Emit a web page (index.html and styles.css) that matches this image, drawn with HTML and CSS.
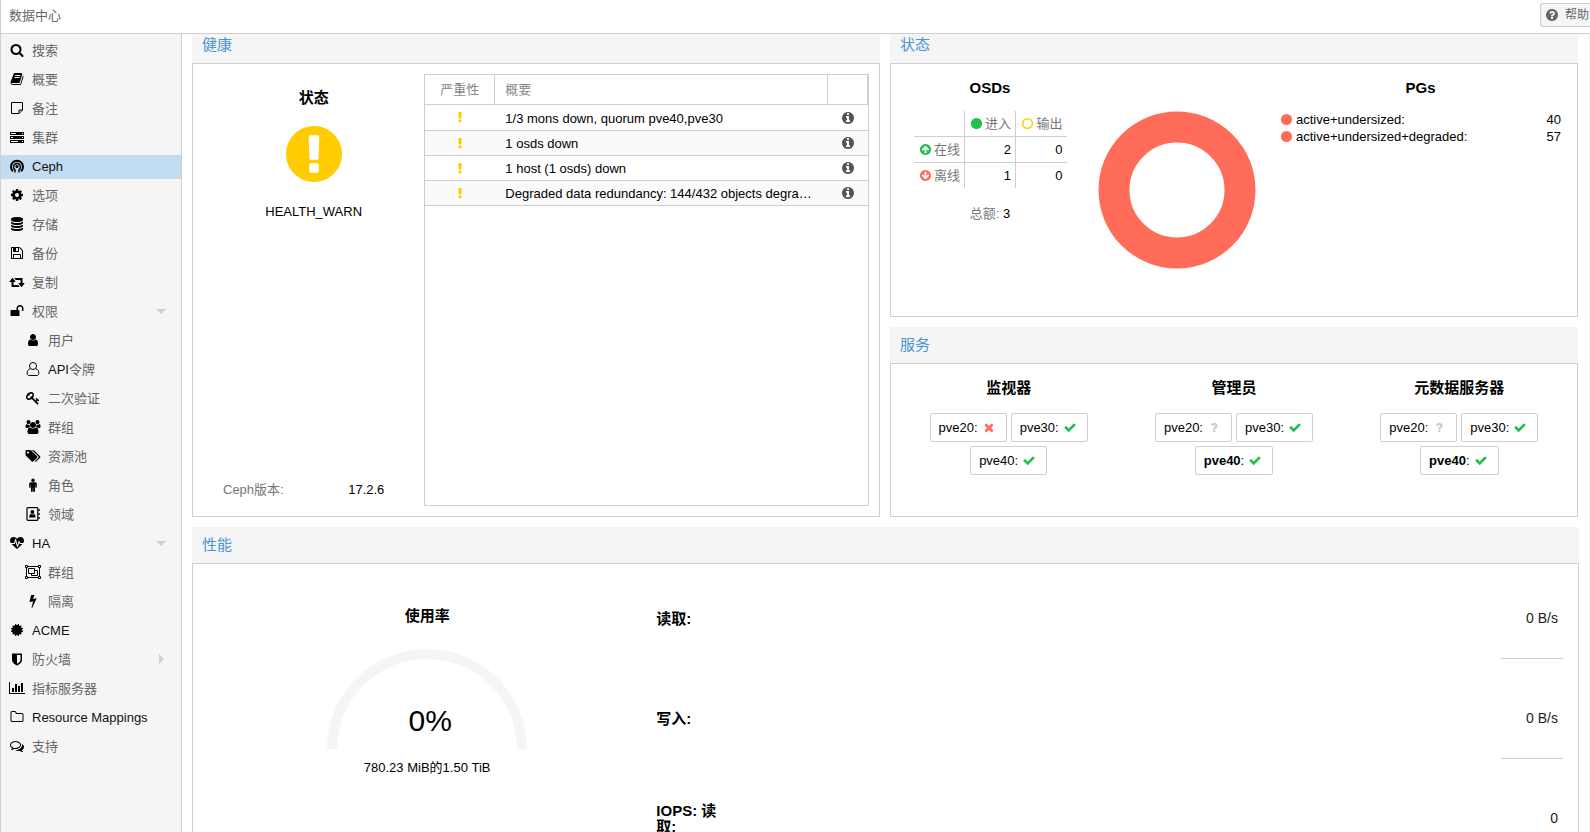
FILE: index.html
```
<!DOCTYPE html>
<html lang="zh-CN">
<head>
<meta charset="utf-8">
<title>数据中心</title>
<link rel="stylesheet" href="styles.css">
</head>
<body>
<svg class="sprite" aria-hidden="true">
  <symbol id="search" viewBox="0 0 1792 1792"><path d="M1216 832q0-185-131.500-316.500t-316.500-131.500-316.500 131.500-131.500 316.500 131.500 316.500 316.500 131.500 316.500-131.500 131.500-316.500zm512 832q0 52-38 90t-90 38q-54 0-90-38l-343-342q-179 124-399 124-143 0-273.500-55.500t-225-150-150-225-55.500-273.500 55.500-273.500 150-225 225-150 273.500-55.500 273.500 55.500 225 150 150 225 55.500 273.500q0 220-124 399l343 343q37 37 37 90z"/></symbol>
  <symbol id="book" viewBox="0 0 1792 1792"><path d="M1703 478q40 57 18 129l-275 906q-19 64-76.500 107.500t-122.500 43.500h-923q-77 0-148.500-53.500t-99.500-131.500q-24-67-2-127 0-4 3-27t4-37q1-8-3-21.500t-3-19.500q2-11 8-21t16.500-23.500 16.500-23.500q23-38 45-91.500t30-91.500q3-10 .5-30t-.5-28q3-11 17-28t17-23q21-36 42-92t25-90q1-9-2.500-32t.5-28q4-13 22-30.500t22-22.500q19-26 42.500-84.500t27.500-96.500q1-8-3-25.500t-2-26.500q2-8 9-18t18-23 17-21q8-12 16.500-30.500t15-35 16-36 19.500-32 26.500-23.500 36-11.500 47.500 5.500l-1 3q38-9 51-9h761q74 0 114 56t18 130l-274 906q-36 119-71.500 153.500t-128.500 34.500h-869q-27 0-38 15-11 16-1 43 24 70 144 70h923q29 0 56-15.500t35-41.500l300-987q7-22 5-57 38 15 59 43zm-1064 2q-4 13 2 22.500t20 9.500h608q13 0 25.500-9.500t16.500-22.500l21-64q4-13-2-22.500t-20-9.500h-608q-13 0-25.500 9.500t-16.500 22.500zm-83 256q-4 13 2 22.500t20 9.500h608q13 0 25.500-9.500t16.500-22.500l21-64q4-13-2-22.500t-20-9.500h-608q-13 0-25.500 9.500t-16.500 22.500z"/></symbol>
  <symbol id="note" viewBox="0 0 14 14"><path fill="none" stroke="currentColor" d="M1.500 1.500h11v7.500l-3.500 3.500h-7.500zM9 12.500v-3.500h3.500"/></symbol>
  <symbol id="server" viewBox="0 0 14 14"><path fill-rule="evenodd" d="M0 2h14v3h-14zM1 3v1h5v-1zM0 6h14v3h-14zM1 7v1h2v-1zM0 10h14v3h-14zM1 11v1h7v-1zM12 3v1h1v-1zM12 7v1h1v-1zM12 11v1h1v-1z"/></symbol>
  <symbol id="ceph" viewBox="0 0 14 14"><g fill="none" stroke="currentColor"><path stroke-width="2" d="M3 12.200a6 6 0 1 1 8 0"/><path stroke-width="1.400" d="M5 13.500v-2.600a3.500 3.500 0 1 1 4 0v2.600"/></g><circle cx="7" cy="7.500" r="1.600"/></symbol>
  <symbol id="cog" viewBox="0 0 1792 1792"><path d="M1152 896q0-106-75-181t-181-75-181 75-75 181 75 181 181 75 181-75 75-181zm512-109v222q0 12-8 23t-20 13l-185 28q-19 54-39 91 35 50 107 138 10 12 10 25t-9 23q-27 37-99 108t-94 71q-12 0-26-9l-138-108q-44 23-91 38-16 136-29 186-7 28-36 28h-222q-14 0-24.500-8.500t-11.500-21.500l-28-184q-49-16-90-37l-141 107q-10 9-25 9-14 0-25-11-126-114-165-168-7-10-7-23 0-12 8-23 15-21 51-66.500t54-70.500q-27-50-41-99l-183-27q-13-2-21-12.500t-8-23.500v-222q0-12 8-23t19-13l186-28q14-46 39-92-40-57-107-138-10-12-10-24 0-10 9-23 26-36 98.500-107.500t94.500-71.500q13 0 26 10l138 107q44-23 91-38 16-136 29-186 7-28 36-28h222q14 0 24.500 8.500t11.500 21.500l28 184q49 16 90 37l142-107q9-9 24-9 13 0 25 10 129 119 165 170 7 8 7 22 0 12-8 23-15 21-51 66.500t-54 70.500q26 50 41 98l183 28q13 2 21 12.500t8 23.500z"/></symbol>
  <symbol id="database" viewBox="0 0 1792 1792"><path d="M896 768q237 0 443-43t325-127v170q0 69-103 128t-280 93.500-385 34.500-385-34.500-280-93.500-103-128v-170q119 84 325 127t443 43zm0 768q237 0 443-43t325-127v170q0 69-103 128t-280 93.500-385 34.500-385-34.500-280-93.500-103-128v-170q119 84 325 127t443 43zm0-384q237 0 443-43t325-127v170q0 69-103 128t-280 93.500-385 34.500-385-34.500-280-93.500-103-128v-170q119 84 325 127t443 43zm0-1152q208 0 385 34.500t280 93.500 103 128v128q0 69-103 128t-280 93.500-385 34.500-385-34.500-280-93.500-103-128v-128q0-69 103-128t280-93.500 385-34.500z"/></symbol>
  <symbol id="floppy" viewBox="0 0 1792 1792"><path d="M512 1536h768v-384h-768v384zm896 0h128v-896q0-14-10-38.500t-20-34.500l-281-281q-10-10-34-20t-39-10v416q0 40-28 68t-68 28h-576q-40 0-68-28t-28-68v-416h-128v1280h128v-416q0-40 28-68t68-28h832q40 0 68 28t28 68v416zm-384-928v-320q0-13-9.500-22.500t-22.500-9.500h-192q-13 0-22.500 9.500t-9.500 22.500v320q0 13 9.500 22.500t22.500 9.500h192q13 0 22.500-9.500t9.500-22.500zm640 32v928q0 40-28 68t-68 28h-1344q-40 0-68-28t-28-68v-1344q0-40 28-68t68-28h928q40 0 88 20t76 48l280 280q28 28 48 76t20 88z"/></symbol>
  <symbol id="retweet" viewBox="0 0 1920 1792"><path d="M1280 1504q0 13-9.500 22.500t-22.500 9.500h-960q-8 0-13.500-2t-9-7-5.500-8-3-11.500-1-11.500v-600h-192q-26 0-45-19t-19-45q0-24 15-41l320-384q19-22 49-22t49 22l320 384q15 17 15 41 0 26-19 45t-45 19h-192v384h576q16 0 25 11l160 192q7 10 7 21zm640-416q0 24-15 41l-320 384q-20 23-49 23t-49-23l-320-384q-15-17-15-41 0-26 19-45t45-19h192v-384h-576q-16 0-25-12l-160-192q-7-9-7-20 0-13 9.500-22.500t22.500-9.500h960q8 0 13.500 2t9 7 5.500 8 3 11.500 1 11.500v600h192q26 0 45 19t19 45z"/></symbol>
  <symbol id="unlock" viewBox="0 0 1792 1792"><path d="M1728 576v256q0 26-19 45t-45 19h-64q-26 0-45-19t-19-45v-256q0-106-75-181t-181-75-181 75-75 181v192h96q40 0 68 28t28 68v576q0 40-28 68t-68 28h-960q-40 0-68-28t-28-68v-576q0-40 28-68t68-28h672v-192q0-185 131.500-316.500t316.500-131.500 316.500 131.500 131.500 316.500z"/></symbol>
  <symbol id="user" viewBox="0 0 1792 1792"><path d="M1536 1399q0 109-62.500 187t-150.500 78h-854q-88 0-150.500-78t-62.500-187q0-85 8.500-160.500t31.500-152 58.500-131 94-89 134.500-34.500q131 128 313 128t313-128q76 0 134.500 34.500t94 89 58.500 131 31.500 152 8.500 160.500zm-256-887q0 159-112.500 271.500t-271.500 112.500-271.500-112.500-112.500-271.500 112.500-271.500 271.500-112.500 271.500 112.500 112.500 271.500z"/></symbol>
  <symbol id="user-o" viewBox="0 0 14 14"><g fill="none" stroke="currentColor"><circle cx="7" cy="4" r="3.500"/><path d="M4 6.800C2 7.300 1.200 9 1.200 11.300c0 1.300.8 2.200 2 2.200h7.600c1.200 0 2-.9 2-2.200 0-2.300-.8-4-2.800-4.500"/></g></symbol>
  <symbol id="key" viewBox="0 0 1792 1792"><path d="M832 512q0-80-56-136t-136-56-136 56-56 136q0 42 19 83-41-19-83-19-80 0-136 56t-56 136 56 136 136 56 136-56 56-136q0-42-19-83 41 19 83 19 80 0 136-56t56-136zm851 704q0 17-49 66t-66 49q-9 0-28.500-16t-36.500-33-38.500-40-24.500-26l-96 96 220 220q28 28 28 68 0 42-39 81t-81 39q-40 0-68-28l-671-671q-176 131-365 131-163 0-265.500-102.500t-102.500-265.500q0-160 95-313t248-248 313-95q163 0 265.500 102.500t102.500 265.500q0 189-131 365l355 355 96-96q-3-3-26-24.500t-40-38.500-33-36.500-16-28.500q0-17 49-66t66-49q13 0 23 10 6 6 46 44.500t82 79.500 86.500 86 73 78 28.500 41z"/></symbol>
  <symbol id="users" viewBox="0 0 2048 1792"><path d="M657 896q-162 5-265 128h-134q-82 0-138-40.500t-56-118.500q0-353 124-353 6 0 43.500 21t97.500 42.500 119 21.500q67 0 133-23-5 37-5 66 0 159 90 256zm1071 637q0 120-73 189.500t-194 69.500h-874q-121 0-194-69.500t-73-189.500q0-53 3.500-103.500t14-109 26.500-108.500 43-97.500 62-81 85.500-53.500 111.500-20q10 0 43 21.500t73 48 107 48 135 21.500 135-21.500 107-48 73-48 43-21.500q61 0 111.500 20t85.500 53.500 62 81 43 97.500 26.500 108.500 14 109 3.500 103.500zm-1024-1277q0 106-75 181t-181 75-181-75-75-181 75-181 181-75 181 75 75 181zm704 384q0 159-112.500 271.500t-271.500 112.500-271.500-112.500-112.500-271.500 112.500-271.500 271.500-112.500 271.500 112.500 112.500 271.500zm576 225q0 78-56 118.500t-138 40.500h-134q-103-123-265-128 90-97 90-256 0-29-5-66 66 23 133 23 59 0 119-21.500t97.500-42.500 43.500-21q124 0 124 353zm-128-609q0 106-75 181t-181 75-181-75-75-181 75-181 181-75 181 75 75 181z"/></symbol>
  <symbol id="tags" viewBox="0 0 1920 1792"><path d="M448 448q0-53-37.500-90.500t-90.500-37.500-90.500 37.500-37.500 90.500 37.500 90.500 90.500 37.500 90.500-37.500 37.500-90.500zm1067 576q0 53-37 90l-491 492q-39 37-91 37-53 0-90-37l-715-716q-38-37-64.500-101t-26.500-117v-416q0-52 38-90t90-38h416q53 0 117 26.500t102 64.500l715 714q37 39 37 91zm384 0q0 53-37 90l-491 492q-39 37-91 37-36 0-59-14t-53-45l470-470q37-37 37-90 0-52-37-91l-715-714q-38-38-102-64.500t-117-26.500h224q53 0 117 26.500t102 64.500l715 714q37 39 37 91z"/></symbol>
  <symbol id="male" viewBox="0 0 14 14"><circle cx="7" cy="2.200" r="1.700"/><path d="M4.700 4.200h4.600a1.500 1.500 0 0 1 1.500 1.500v3.500a.8.800 0 0 1-1.500 0v-2.800h-.3v6.600a.9.900 0 0 1-1.800 0v-3.500h-.4v3.500a.9.900 0 0 1-1.800 0v-6.600h-.3v2.800a.8.800 0 0 1-1.500 0v-3.500a1.500 1.500 0 0 1 1.500-1.500z"/></symbol>
  <symbol id="address" viewBox="0 0 14 14"><rect x="1" y=".6" width="10.800" height="12.800" rx="1" fill="none" stroke="currentColor" stroke-width="1.200"/><circle cx="6.400" cy="5" r="1.900"/><path d="M3.200 10.500c0-2 .6-3.400 1.700-3.600q1.500 1 3 0c1.100.2 1.700 1.600 1.700 3.600zM12.300 2h1.400v2h-1.400zM12.300 6h1.400v2h-1.400zM12.300 10h1.400v2h-1.400z"/></symbol>
  <symbol id="heartbeat" viewBox="0 -128 1792 1792"><path d="M1280 896h305q-5 6-10 10.500t-9 7.500l-3 4-623 600q-18 18-44 18t-44-18l-624-602q-5-2-21-20h369q22 0 39.500-13.500t22.500-34.500l70-281 190 667q6 20 23 33t39 13q21 0 38-13t23-33l146-485 56 112q18 35 57 35zm512-428q0 145-103 300h-369l-111-221q-8-17-25.500-27t-36.500-8q-45 5-56 46l-129 430-196-686q-6-20-23.500-33t-39.500-13-39 13.500-22 34.500l-116 464h-423q-103-155-103-300 0-220 127-344t351-124q62 0 126.500 21.500t120 58 95.500 68.500 76 68q36-36 76-68t95.500-68.500 120-58 126.500-21.500q224 0 351 124t127 344z"/></symbol>
  <symbol id="group" viewBox="0 0 16 14"><g fill="none" stroke="currentColor"><path d="M3 1.500h10M3 12.500h10M1.500 3v8M14.500 3v8"/><path d="M.5.500h2v2h-2zM13.500.500h2v2h-2zM.5 11.500h2v2h-2zM13.500 11.500h2v2h-2z"/><path d="M3.500 3.500h6v5h-6zM9.500 5.500h3v5h-6v-2"/></g></symbol>
  <symbol id="bolt" viewBox="0 0 1792 1792"><path d="M1333 566q18 20 7 44l-540 1157q-13 25-42 25-4 0-14-2-17-5-25.500-19t-4.500-30l197-808-406 101q-4 1-12 1-18 0-31-11-18-15-13-39l201-825q4-14 16-23t28-9h328q19 0 32 12.500t13 29.500q0 8-5 18l-171 463 396-98q8-2 12-2 19 0 34 15z"/></symbol>
  <symbol id="certificate" viewBox="0 0 1792 1792"><path d="M1504 896l138 135q30 28 20 70-12 41-52 51l-188 48 53 186q12 41-19 70-29 31-70 19l-186-53-48 188q-10 40-51 52-12 2-19 2-31 0-51-22l-135-138-135 138q-28 30-70 20-41-11-51-52l-48-188-186 53q-41 12-70-19-31-29-19-70l53-186-188-48q-40-10-52-51-10-42 20-70l138-135-138-135q-30-28-20-70 12-41 52-51l188-48-53-186q-12-41 19-70 29-31 70-19l186 53 48-188q10-41 51-51 41-12 70 19l135 139 135-139q29-30 70-19 41 10 51 51l48 188 186-53q41-12 70 19 31 29 19 70l-53 186 188 48q40 10 52 51 10 42-20 70z"/></symbol>
  <symbol id="shield" viewBox="0 0 1792 1792"><path d="M1344 1024v-640h-448v1137q119-63 213-137 235-184 235-360zm192-768v768q0 86-33.500 170.500t-83 150-118 127.500-126.500 103-121 77.500-89.500 49.500-42.500 20q-12 6-26 6t-26-6q-16-7-42.500-20t-89.500-49.500-121-77.500-126.500-103-118-127.500-83-150-33.500-170.500v-768q0-26 19-45t45-19h1152q26 0 45 19t19 45z"/></symbol>
  <symbol id="chart" viewBox="0 0 2048 1792"><path d="M640 896v512h-256v-512h256zm384-512v1024h-256v-1024h256zm1024 1152v128h-2048v-1536h128v1408h1920zm-640-896v768h-256v-768h256zm384-384v1152h-256v-1152h256z"/></symbol>
  <symbol id="folder" viewBox="0 0 1792 1792"><path d="M1600 1312v-704q0-40-28-68t-68-28h-704q-40 0-68-28t-28-68v-64q0-40-28-68t-68-28h-320q-40 0-68 28t-28 68v960q0 40 28 68t68 28h1216q40 0 68-28t28-68zm128-704v704q0 92-66 158t-158 66h-1216q-92 0-158-66t-66-158v-960q0-92 66-158t158-66h320q92 0 158 66t66 158v32h672q92 0 158 66t66 158z"/></symbol>
  <symbol id="comments" viewBox="0 0 1792 1792"><path d="M704 384q-153 0-286 52t-211.500 141-78.500 191q0 82 53 158t149 132l97 56-35 84q34-20 62-39l44-31 53 10q78 14 153 14 153 0 286-52t211.500-141 78.500-191-78.500-191-211.500-141-286-52zm0-128q191 0 353.500 68.500t256.500 186.500 94 257-94 257-256.500 186.500-353.500 68.500q-86 0-176-16-124 88-278 128-36 9-86 16h-3q-11 0-20.500-8t-11.500-21q-1-3-1-6.500t.5-6.500 2-6l2.500-5 3.500-5.500 4-5 4.500-5 4-4.500q5-6 23-25t26-29.500 22.500-29 25-38.500 20.500-44q-124-72-195-177t-71-224q0-139 94-257t256.500-186.500 353.500-68.500zm822 1169q10 24 20.500 44t25 38.500 22.500 29 26 29.500 23 25q1 1 4 4.500t4.500 5 4 5 3.500 5.500l2.500 5 2 6 .5 6.500-1 6.500q-3 14-13 22t-22 7q-50-7-86-16-154-40-278-128-90 16-176 16-271 0-472-132 58 4 88 4 161 0 309-45t264-129q125-92 192-212t67-254q0-77-23-152 129 71 204 178t75 230q0 120-71 224.500t-195 176.500z"/></symbol>
  <symbol id="help" viewBox="0 0 1792 1792"><path d="M1024 1376v-192q0-14-9-23t-23-9h-192q-14 0-23 9t-9 23v192q0 14 9 23t23 9h192q14 0 23-9t9-23zm256-672q0-88-55.500-163t-138.500-116-170-41q-243 0-371 213-15 24 8 42l132 100q7 6 19 6 16 0 25-12 53-68 86-92 34-24 86-24 48 0 85.500 26t37.500 59q0 38-20 61t-68 45q-63 28-115.500 86.500t-52.500 125.500v36q0 14 9 23t23 9h192q14 0 23-9t9-23q0-19 21.500-49.500t54.500-49.500q32-18 49-28.500t46-35 44.500-48 28-60.500 12.500-81zm384 192q0 209-103 385.500t-279.500 279.500-385.500 103-385.500-103-279.500-279.500-103-385.500 103-385.500 279.500-279.500 385.500-103 385.500 103 279.500 279.500 103 385.500z"/></symbol>
  <symbol id="warn" viewBox="128 128 1536 1536"><path d="M896 128q209 0 385.500 103t279.500 279.500 103 385.500-103 385.500-279.500 279.500-385.500 103-385.500-103-279.500-279.500-103-385.500 103-385.500 279.500-279.500 385.500-103zm128 1247v-190q0-14-9-23.500t-22-9.500h-192q-13 0-23 10t-10 23v190q0 13 10 23t23 10h192q13 0 22-9.500t9-23.500zm-2-344l18-621q0-12-10-18-10-8-24-8h-220q-14 0-24 8-10 6-10 18l17 621q0 10 10 17.500t24 7.500h185q14 0 23.500-7.500t10.500-17.500z"/></symbol>
  <symbol id="bang" viewBox="0 0 1792 1792"><path d="M1088 1248v224q0 26-19 45t-45 19h-256q-26 0-45-19t-19-45v-224q0-26 19-45t45-19h256q26 0 45 19t19 45zm30-1056l-28 768q-1 26-20.500 45t-45.500 19h-256q-26 0-45.500-19t-20.500-45l-28-768q-1-26 17.500-45t44.500-19h320q26 0 44.500 19t17.500 45z"/></symbol>
  <symbol id="info" viewBox="0 0 1792 1792"><path d="M1152 1376v-160q0-14-9-23t-23-9h-96v-512q0-14-9-23t-23-9h-320q-14 0-23 9t-9 23v160q0 14 9 23t23 9h96v320h-96q-14 0-23 9t-9 23v160q0 14 9 23t23 9h448q14 0 23-9t9-23zm-128-896v-160q0-14-9-23t-23-9h-192q-14 0-23 9t-9 23v160q0 14 9 23t23 9h192q14 0 23-9t9-23zm640 416q0 209-103 385.500t-279.500 279.500-385.500 103-385.500-103-279.500-279.500-103-385.500 103-385.500 279.500-279.500 385.500-103 385.500 103 279.500 279.500 103 385.500z"/></symbol>
  <symbol id="arrow-up" viewBox="0 0 1792 1792"><path d="M1412 895q0-27-18-45l-362-362-91-91q-18-18-45-18t-45 18l-91 91-362 362q-18 18-18 45t18 45l91 91q18 18 45 18t45-18l189-189v502q0 26 19 45t45 19h128q26 0 45-19t19-45v-502l189 189q19 19 45 19t45-19l91-91q18-18 18-45zm252 1q0 209-103 385.500t-279.500 279.500-385.500 103-385.500-103-279.500-279.500-103-385.500 103-385.500 279.500-279.500 385.500-103 385.500 103 279.500 279.500 103 385.500z"/></symbol>
  <symbol id="dot" viewBox="0 0 14 14"><circle cx="7" cy="7" r="6"/></symbol>
  <symbol id="ring" viewBox="0 0 14 14"><circle cx="7" cy="7" r="5.200" fill="none" stroke="currentColor" stroke-width="1.600"/></symbol>
  <symbol id="check" viewBox="0 0 1792 1792"><path d="M1671 566q0 40-28 68l-724 724-136 136q-28 28-68 28t-68-28l-136-136-362-362q-28-28-28-68t28-68l136-136q28-28 68-28t68 28l294 295 656-657q28-28 68-28t68 28l136 136q28 28 28 68z"/></symbol>
  <symbol id="times" viewBox="0 0 1792 1792"><path d="M1490 1322q0 40-28 68l-136 136q-28 28-68 28t-68-28l-294-294-294 294q-28 28-68 28t-68-28l-136-136q-28-28-28-68t28-68l294-294-294-294q-28-28-28-68t28-68l136-136q28-28 68-28t68 28l294 294 294-294q28-28 68-28t68 28l136 136q28 28 28 68t-28 68l-294 294 294 294q28 28 28 68z"/></symbol>
  <symbol id="question" viewBox="0 0 1792 1792"><path d="M1088 1256v240q0 16-12 28t-28 12h-240q-16 0-28-12t-12-28v-240q0-16 12-28t28-12h240q16 0 28 12t12 28zm316-600q0 54-15.500 101t-35 76.500-55 59.500-57.500 43.500-61 35.500q-41 23-68.500 65t-27.500 67q0 17-12 32.500t-28 15.500h-240q-15 0-25.500-18.500t-10.500-37.500v-45q0-83 65-156.500t143-108.500q59-27 84-56t25-76q0-42-46.500-74t-107.500-32q-65 0-108 29-35 25-107 115-13 16-31 16-12 0-25-8l-164-125q-13-10-15.500-25t5.500-28q160-266 464-266 80 0 161 31t146 83 106 127.500 41 158.500z"/></symbol>
</svg>

<div class="app">
  <header class="topbar">
    <span class="topbar-title">数据中心</span>
    <button class="help" type="button"><svg class="icon"><use href="#help"/></svg>帮助</button>
  </header>
  <div class="workspace">
    <nav class="sidebar">
      <a class="item" href="#"><svg class="icon"><use href="#search"/></svg>搜索</a>
      <a class="item" href="#"><svg class="icon"><use href="#book"/></svg>概要</a>
      <a class="item" href="#"><svg class="icon"><use href="#note"/></svg>备注</a>
      <a class="item" href="#"><svg class="icon"><use href="#server"/></svg>集群</a>
      <a class="item selected" href="#" aria-current="page"><svg class="icon"><use href="#ceph"/></svg><span class="latin">Ceph</span></a>
      <a class="item" href="#"><svg class="icon"><use href="#cog"/></svg>选项</a>
      <a class="item" href="#"><svg class="icon"><use href="#database"/></svg>存储</a>
      <a class="item" href="#"><svg class="icon"><use href="#floppy"/></svg>备份</a>
      <a class="item" href="#"><svg class="icon"><use href="#retweet"/></svg>复制</a>
      <a class="item open" href="#"><svg class="icon"><use href="#unlock"/></svg>权限</a>
      <a class="item child" href="#"><svg class="icon"><use href="#user"/></svg>用户</a>
      <a class="item child" href="#"><svg class="icon"><use href="#user-o"/></svg><span class="latin">API</span>令牌</a>
      <a class="item child" href="#"><svg class="icon"><use href="#key"/></svg>二次验证</a>
      <a class="item child" href="#"><svg class="icon"><use href="#users"/></svg>群组</a>
      <a class="item child" href="#"><svg class="icon"><use href="#tags"/></svg>资源池</a>
      <a class="item child" href="#"><svg class="icon"><use href="#male"/></svg>角色</a>
      <a class="item child" href="#"><svg class="icon"><use href="#address"/></svg>领域</a>
      <a class="item open" href="#"><svg class="icon"><use href="#heartbeat"/></svg><span class="latin">HA</span></a>
      <a class="item child" href="#"><svg class="icon"><use href="#group"/></svg>群组</a>
      <a class="item child" href="#"><svg class="icon"><use href="#bolt"/></svg>隔离</a>
      <a class="item" href="#"><svg class="icon"><use href="#certificate"/></svg><span class="latin">ACME</span></a>
      <a class="item closed" href="#"><svg class="icon"><use href="#shield"/></svg>防火墙</a>
      <a class="item" href="#"><svg class="icon"><use href="#chart"/></svg>指标服务器</a>
      <a class="item" href="#"><svg class="icon"><use href="#folder"/></svg><span class="latin">Resource Mappings</span></a>
      <a class="item" href="#"><svg class="icon"><use href="#comments"/></svg>支持</a>
    </nav>

    <main class="content">
      <div class="columns">
        <section class="panel">
          <h2 class="panel-head top">健康</h2>
          <div class="panel-body health">
            <div class="health-state">
              <h3>状态</h3>
              <svg class="health-icon"><use href="#warn"/></svg>
              <p>HEALTH_WARN</p>
              <dl class="version"><dt>Ceph版本:</dt><dd>17.2.6</dd></dl>
            </div>
            <div class="grid">
              <table class="warnings">
                <thead><tr><th class="sev">严重性</th><th>概要</th><th class="act"></th></tr></thead>
                <tbody>
                  <tr><td class="sev"><svg class="icon"><use href="#bang"/></svg></td><td>1/3 mons down, quorum pve40,pve30</td><td class="act"><svg class="icon"><use href="#info"/></svg></td></tr>
                  <tr><td class="sev"><svg class="icon"><use href="#bang"/></svg></td><td>1 osds down</td><td class="act"><svg class="icon"><use href="#info"/></svg></td></tr>
                  <tr><td class="sev"><svg class="icon"><use href="#bang"/></svg></td><td>1 host (1 osds) down</td><td class="act"><svg class="icon"><use href="#info"/></svg></td></tr>
                  <tr><td class="sev"><svg class="icon"><use href="#bang"/></svg></td><td>Degraded data redundancy: 144/432 objects degra…</td><td class="act"><svg class="icon"><use href="#info"/></svg></td></tr>
                </tbody>
              </table>
            </div>
          </div>
        </section>

        <div class="stack">
          <section class="panel status-panel">
            <h2 class="panel-head top">状态</h2>
            <div class="panel-body status">
              <div class="osds">
                <h3>OSDs</h3>
                <table class="osd-table">
                  <tr><td></td><th><svg class="icon good"><use href="#dot"/></svg>进入</th><th><svg class="icon warning"><use href="#ring"/></svg>输出</th></tr>
                  <tr><th><svg class="icon good"><use href="#arrow-up"/></svg>在线</th><td>2</td><td>0</td></tr>
                  <tr><th><svg class="icon bad flip"><use href="#arrow-up"/></svg>离线</th><td>1</td><td>0</td></tr>
                </table>
                <p class="total"><span>总额:</span> 3</p>
              </div>
              <svg class="donut" viewBox="0 0 158 158"><circle cx="79" cy="79" r="63"/></svg>
              <div class="pgs">
                <h3>PGs</h3>
                <ul>
                  <li><svg class="icon bad"><use href="#dot"/></svg>active+undersized:<span>40</span></li>
                  <li><svg class="icon bad"><use href="#dot"/></svg>active+undersized+degraded:<span>57</span></li>
                </ul>
              </div>
            </div>
          </section>

          <section class="panel">
            <h2 class="panel-head">服务</h2>
            <div class="panel-body services">
              <div class="service">
                <h3>监视器</h3>
                <div class="nodes">
                  <span class="node">pve20:<svg class="icon bad"><use href="#times"/></svg></span>
                  <span class="node">pve30:<svg class="icon good"><use href="#check"/></svg></span>
                  <span class="node">pve40:<svg class="icon good"><use href="#check"/></svg></span>
                </div>
              </div>
              <div class="service">
                <h3>管理员</h3>
                <div class="nodes">
                  <span class="node">pve20:<svg class="icon unknown"><use href="#question"/></svg></span>
                  <span class="node">pve30:<svg class="icon good"><use href="#check"/></svg></span>
                  <span class="node"><b>pve40</b>:<svg class="icon good"><use href="#check"/></svg></span>
                </div>
              </div>
              <div class="service">
                <h3>元数据服务器</h3>
                <div class="nodes">
                  <span class="node">pve20:<svg class="icon unknown"><use href="#question"/></svg></span>
                  <span class="node">pve30:<svg class="icon good"><use href="#check"/></svg></span>
                  <span class="node"><b>pve40</b>:<svg class="icon good"><use href="#check"/></svg></span>
                </div>
              </div>
            </div>
          </section>
        </div>
      </div>

      <section class="panel performance-panel">
        <h2 class="panel-head">性能</h2>
        <div class="panel-body performance">
          <div class="usage">
            <h3>使用率</h3>
            <div class="gauge">
              <svg viewBox="0 0 200 100"><path d="M5 100a95 95 0 0 1 190 0"/></svg>
              <span class="gauge-value">0%</span>
            </div>
            <p>780.23 MiB的1.50 TiB</p>
          </div>
          <div class="rates">
            <div class="rate"><h3>读取:</h3><div class="spark"><span>0 B/s</span></div></div>
            <div class="rate"><h3>写入:</h3><div class="spark"><span>0 B/s</span></div></div>
            <div class="rate"><h3>IOPS: 读取:</h3><div class="spark"><span>0</span></div></div>
          </div>
        </div>
      </section>
    </main>
  </div>
</div>
</body>
</html>
```
FILE: styles.css
```
* { box-sizing: border-box; }

body {
  margin: 0;
  background: #fff;
  color: #000;
  font: 13px/17px "Liberation Sans", "Noto Sans CJK SC", sans-serif;
}

h2, h3, p, ul, dl, dd { margin: 0; padding: 0; }
ul { list-style: none; }
h3 { font-size: 15px; line-height: 16px; font-weight: bold; }

.sprite { position: absolute; width: 0; height: 0; }
.icon { width: 18px; height: 14px; fill: currentColor; flex: none; }
.good { color: #21bf4b; }
.bad { color: #ff6c59; }
.warning { color: #fc0; }
.unknown { color: #ccc; }
.flip { transform: rotate(180deg); }

.app {
  display: flex;
  flex-direction: column;
  height: 100vh;
  overflow: hidden;
  border-left: 1px solid #cfcfcf;
}

.topbar {
  display: flex;
  flex: none;
  justify-content: space-between;
  align-items: center;
  height: 34px;
  padding: 0 0 3px 8px;
  border-bottom: 1px solid #cfcfcf;
}
.topbar-title { color: #666; }
.help {
  display: flex;
  align-items: center;
  gap: 4px;
  height: 24px;
  padding: 0 1px 0 2px;
  border: 1px solid #cfcfcf;
  border-right: 0;
  border-radius: 3px 0 0 3px;
  background: #f5f5f5;
  color: #666;
  font: 12px/16px "Liberation Sans", "Noto Sans CJK SC", sans-serif;
}

.workspace { display: flex; flex: 1; min-height: 0; }

.sidebar {
  display: flex;
  flex: none;
  flex-direction: column;
  gap: 5px;
  width: 181px;
  padding-top: 5px;
  border-right: 1px solid #cfcfcf;
  background: #f5f5f5;
}
.item {
  display: flex;
  align-items: center;
  height: 24px;
  padding: 0 15px 2px 7px;
  color: #666;
  text-decoration: none;
}
.item .icon { margin-right: 6px; color: #000; }
.item .latin { color: #111; }
.child { padding-left: 23px; }
.selected { background: #c2ddf2; }
.open::after, .closed::after { content: ""; margin-left: auto; border: 5px solid transparent; }
.open::after { border-top-color: #cfcfcf; border-bottom: 0; }
.closed::after { border-left-color: #cfcfcf; border-right: 0; margin-right: 2px; }

.content {
  flex: 1;
  min-width: 0;
  overflow: hidden;
  padding: 0 10px;
  border-right: 1px solid #f0f0f0;
}
.columns { display: grid; grid-template-columns: 1fr 1fr; gap: 10px; padding-right: 1px; }
.stack { display: flex; flex-direction: column; gap: 10px; }
.panel { display: flex; flex-direction: column; }
.panel-head {
  padding: 7px 10px;
  background: #f5f5f5;
  color: #4a94d2;
  font-size: 15px;
  line-height: 22px;
  font-weight: normal;
}
.panel-head.top { padding-top: 0; }
.panel-body { flex: 1; border: 1px solid #cfcfcf; }

.health { display: flex; padding: 10px; }
.health-state {
  display: flex;
  flex: 1;
  flex-direction: column;
  align-items: center;
  padding-top: 16px;
}
.health-icon { width: 56px; height: 56px; margin: 20px 0 21px; fill: #fc0; }
.version { display: flex; align-self: stretch; margin: auto 40px 8px 20px; }
.version dt { flex: 1; color: #777; }
.grid { flex: 2; min-width: 0; border: 1px solid #cfcfcf; }
.warnings { width: 100%; border-spacing: 0; table-layout: fixed; }
.warnings th {
  height: 30px;
  padding: 0 10px;
  border: solid #cfcfcf;
  border-width: 0 1px 1px 0;
  color: #888;
  font-weight: normal;
  text-align: left;
}
.warnings td {
  height: 25px;
  padding: 1px 10px 0;
  border-bottom: 1px solid #cfcfcf;
  white-space: nowrap;
}
.warnings tbody tr:first-child td { height: 26px; }
.warnings tr:nth-child(even) { background: #fafafa; }
.warnings .sev { width: 70px; padding: 0; text-align: center; }
.warnings .act { width: 40px; padding: 0; text-align: center; }
.warnings .icon { display: block; margin: 0 auto; }
.warnings .act .icon { color: #555; }
td.sev { color: #fc0; }
td.sev .icon { height: 13px; }

.status-panel { flex: none; }
.status { display: grid; grid-template-columns: 178fr 196fr 292fr; min-height: 254px; padding: 10px; }
.osds { display: flex; flex-direction: column; align-items: center; padding-top: 6px; }
.osd-table { margin-top: 15px; border-collapse: collapse; }
.osd-table td, .osd-table th {
  width: 51px;
  height: 26px;
  padding: 0 4px 0 0;
  border: 1px solid #cfcfcf;
  font-weight: normal;
  text-align: right;
  white-space: nowrap;
}
.osd-table th { color: #777; }
.osd-table tr:first-child > * { height: 25px; border-top: 0; }
.osd-table tr:last-child > * { border-bottom: 0; }
.osd-table tr > :first-child { border-left: 0; }
.osd-table tr > :last-child { border-right: 0; }
.osd-table .icon { width: 13px; height: 13px; margin-right: 2px; vertical-align: -2px; }
.total { margin-top: 17px; }
.total span { color: #777; }
.donut { width: 158px; height: 158px; margin: 37px auto 0; }
.donut circle { fill: none; stroke: #ff6c59; stroke-width: 31; }
.pgs { padding: 6px 6px 0 5px; }
.pgs h3 { text-align: center; }
.pgs ul { margin-top: 15px; }
.pgs li { display: flex; align-items: center; }
.pgs .icon { width: 13px; height: 13px; margin-right: 3px; }
.pgs span { margin-left: auto; }

.services { display: grid; grid-template-columns: repeat(3, 1fr); min-height: 154px; padding: 16px 5px; }
.service { display: flex; flex-direction: column; align-items: center; gap: 17px; }
.nodes { display: flex; flex-wrap: wrap; justify-content: center; gap: 4px; width: 180px; }
.node {
  display: flex;
  align-items: center;
  height: 29px;
  padding: 0 8px;
  border: 1px solid #cfcfcf;
  border-radius: 2px;
}
.node .icon { margin-left: 2px; height: 13px; }

.performance-panel { margin-top: 10px; }
.performance { display: grid; grid-template-columns: 448fr 916fr; padding: 5px 10px; }
.usage { display: flex; flex-direction: column; align-items: center; padding-top: 39px; }
.gauge { display: grid; width: 200px; margin: 25px 0 10px; }
.gauge > * { grid-area: 1 / 1; }
.gauge path { fill: none; stroke: #f5f5f5; stroke-width: 10; }
.gauge-value { place-self: end center; padding: 0 0 11px 6px; font-size: 30px; line-height: 34px; }
.rates { padding: 0 5px; }
.rate { display: flex; align-items: center; justify-content: space-between; height: 100px; }
.rate h3 { width: 75px; }
.spark {
  width: 62px;
  height: 80px;
  padding: 30px 5px 0 0;
  border-bottom: 1px solid #cfcfcf;
  color: #222;
  font-size: 14px;
  line-height: 18px;
  text-align: right;
  white-space: nowrap;
}
```
